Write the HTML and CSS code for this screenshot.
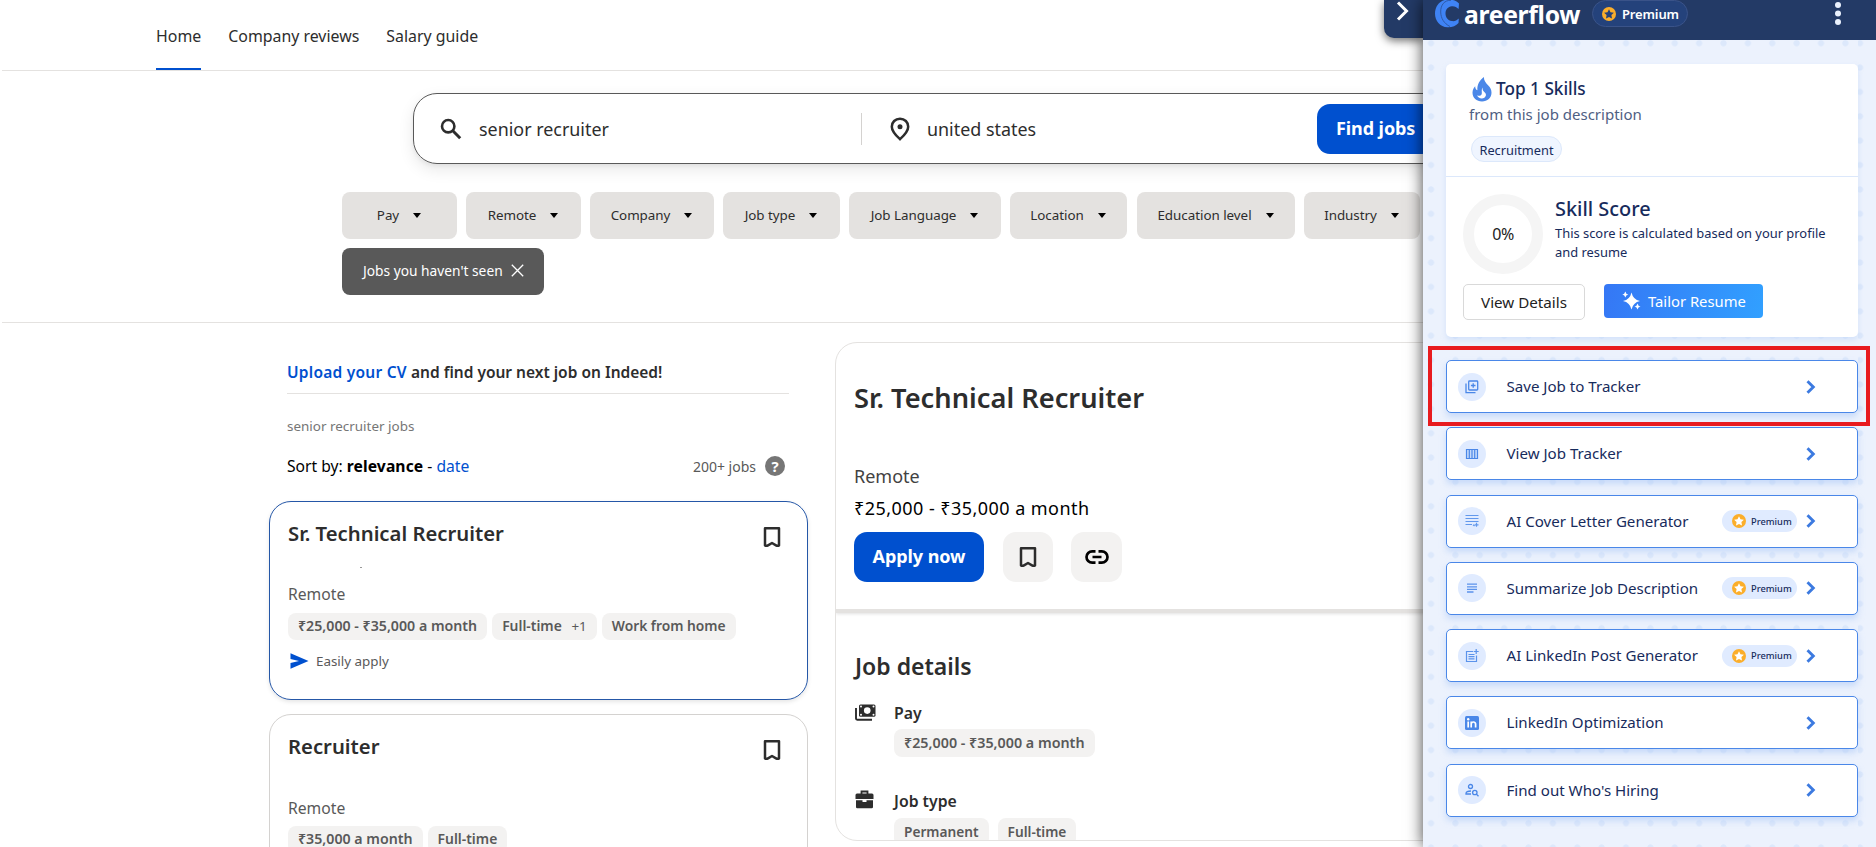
FILE: index.html
```html
<!DOCTYPE html>
<html lang="en">
<head>
<meta charset="utf-8">
<title>Job search</title>
<link rel="stylesheet" href="styles.css">
</head>
<body>
<svg class="defs" width="0" height="0">
  <symbol id="bookmark" viewBox="0 0 24 24"><path d="M5 3.2h14v17.3q-1.3.8-3-.2L12 18l-4 2.300q-1.700 1-3 .2z" fill="none" stroke="currentColor" stroke-width="2.500" stroke-linejoin="round"/></symbol>
  <symbol id="star" viewBox="0 0 14 14"><circle cx="7" cy="7" r="7" fill="#fbae2b"/><path class="star-shape" d="M7 2.200l1.500 3.100 3.400.5-2.500 2.300.6 3.400L7 9.900l-3 1.600.6-3.400L2.100 5.800l3.400-.5z"/></symbol>
  <symbol id="chevron" viewBox="0 0 10 14"><path d="M1.500 1.200L7.300 7l-5.800 5.800" fill="none" stroke="currentColor" stroke-width="2.900"/></symbol>
</svg>
<div class="site">
  <nav class="nav">
    <a class="active">Home</a><a>Company reviews</a><a>Salary guide</a>
  </nav>
  <section class="search-area">
    <form class="search">
      <div class="field what">
        <svg width="22" height="22" viewBox="0 0 22 22"><circle cx="8.200" cy="8.200" r="6.200" fill="none" stroke="#2d2d2d" stroke-width="2.600"/><path d="M12.800 12.800l7.400 7.400" stroke="#2d2d2d" stroke-width="3"/></svg>
        <span>senior recruiter</span>
      </div>
      <div class="field where">
        <svg width="20" height="24" viewBox="0 0 20 24"><path d="M10 1.700c-4.700 0-8.200 3.500-8.200 8 0 5 8.200 12.500 8.200 12.500s8.200-7.500 8.200-12.500c0-4.500-3.500-8-8.200-8z" fill="none" stroke="#2d2d2d" stroke-width="2.500"/><circle cx="10" cy="9.700" r="2.500" fill="#2d2d2d"/></svg>
        <span>united states</span>
      </div>
      <div class="find">Find jobs</div>
    </form>
    <div class="filters">
      <span class="chip w-pay">Pay<i></i></span><span class="chip w-remote">Remote<i></i></span><span class="chip w-company">Company<i></i></span><span class="chip w-type">Job type<i></i></span><span class="chip w-lang">Job Language<i></i></span><span class="chip w-loc">Location<i></i></span><span class="chip w-edu">Education level<i></i></span><span class="chip w-ind">Industry<i></i></span>
    </div>
    <div class="unseen">Jobs you haven't seen<svg width="13" height="13" viewBox="0 0 13 13"><path d="M.8.8l11.400 11.400M12.200.8L.8 12.200" stroke="#fff" stroke-width="1.300"/></svg></div>
  </section>
  <main class="content">
    <section class="list">
      <div class="list-head">
        <div class="upload"><a>Upload your CV</a> and find your next job on Indeed!</div>
        <div class="query">senior recruiter jobs</div>
        <div class="sort"><span>Sort by: <b>relevance</b> - <a>date</a></span><span class="count">200+ jobs <em>?</em></span></div>
      </div>
      <article class="job selected">
        <header><h2>Sr. Technical Recruiter</h2><svg class="bm" width="24" height="24"><use href="#bookmark"/></svg></header>
        <div class="smudge"></div>
        <div class="loc">Remote</div>
        <div class="tags"><span class="tag">₹25,000 - ₹35,000 a month</span><span class="tag">Full-time <small>+1</small></span><span class="tag home">Work from home</span></div>
        <div class="easy"><svg width="19" height="16" viewBox="0 0 19 16"><path d="M.5.3L18.500 8 .5 15.700V9.900L9 8 .5 6.100z" fill="#0050cf"/></svg>Easily apply</div>
      </article>
      <article class="job">
        <header><h2>Recruiter</h2><svg class="bm" width="24" height="24"><use href="#bookmark"/></svg></header>
        <div class="smudge none"></div>
        <div class="loc second">Remote</div>
        <div class="tags"><span class="tag">₹35,000 a month</span><span class="tag">Full-time</span></div>
      </article>
    </section>
    <section class="detail">
      <div class="detail-top">
        <h1>Sr. Technical Recruiter</h1>
        <div class="d-loc">Remote</div>
        <div class="d-pay">₹25,000 - ₹35,000 a month</div>
        <div class="actions">
          <span class="apply">Apply now</span>
          <span class="sq"><svg class="bm" width="24" height="24"><use href="#bookmark"/></svg></span>
          <span class="sq link"><svg width="24" height="16" viewBox="0 0 24 16"><path d="M10.500 2.300H7.200a5.700 5.700 0 0 0 0 11.400h3.300M13.500 2.300h3.300a5.700 5.700 0 0 1 0 11.400h-3.300M7.500 8h9" fill="none" stroke="#000" stroke-width="2.700"/></svg></span>
        </div>
      </div>
      <div class="detail-body">
        <h3>Job details</h3>
        <div class="fact pay">
          <svg width="21" height="17" viewBox="0 0 21 17"><path d="M1 4v10.500q0 1.200 1.200 1.200H17" fill="none" stroke="#2d2d2d" stroke-width="1.900"/><rect x="4" y=".5" width="16.500" height="12.200" rx="1.500" fill="#2d2d2d"/><circle cx="12.250" cy="6.600" r="3.300" fill="#fff"/><g fill="#fff"><circle cx="6" cy="2.500" r="1"/><circle cx="18.500" cy="2.500" r="1"/><circle cx="6" cy="10.700" r="1"/><circle cx="18.500" cy="10.700" r="1"/></g></svg>
          <div><h4>Pay</h4><div class="tags"><span class="tag">₹25,000 - ₹35,000 a month</span></div></div>
        </div>
        <div class="fact type">
          <svg width="20" height="19" viewBox="0 0 20 19"><path d="M6.500 4V1.500h6V4" fill="none" stroke="#2d2d2d" stroke-width="1.800"/><path d="M2 3.500h15q1.500 0 1.500 1.500v4h-18V5q0-1.500 1.500-1.500zM1 10.300h6.500v1.700h4v-1.700H18V17q0 1.300-1.300 1.300H2.300Q1 18.300 1 17z" fill="#2d2d2d"/></svg>
          <div><h4>Job type</h4><div class="tags"><span class="tag">Permanent</span><span class="tag">Full-time</span></div></div>
        </div>
      </div>
    </section>
  </main>
</div>

<div class="tab"><svg width="14" height="20" viewBox="0 0 14 20"><path d="M2 1.500L10.500 10 2 18.500" fill="none" stroke="#fff" stroke-width="3"/></svg></div>
<aside class="panel">
  <header class="brand">
    <svg class="logo" width="25" height="28" viewBox="0 0 25 28"><path d="M24 3.500C21 .5 17-.8 12.500-.5 5 0 0 6 0 13.500S5 27 12.500 27.300c4.500.2 8.500-1.300 11-4.300l.3-4.500c-2 2-4.500 3-7 2.500-3.800-.6-6.300-3.500-6.300-7.500s2.500-6.800 6.300-7.300c2.500-.3 5 .8 6.800 2.800z" fill="#3f83f4"/><path d="M16 .3C9.500 0 5.500 5 5.700 12c.2 6.500 3.300 11.500 9.300 14.500" fill="none" stroke="#2c559f" stroke-width=".9"/></svg>
    <span class="name">areerflow</span>
    <span class="badge"><svg width="14" height="14"><use href="#star"/></svg>Premium</span>
    <svg class="more" width="6" height="24" viewBox="0 0 6 24"><g fill="#eaf1fd"><circle cx="3" cy="3" r="3"/><circle cx="3" cy="11.500" r="3"/><circle cx="3" cy="20" r="3"/></g></svg>
  </header>
  <div class="panel-body">
    <div class="dots">
    <div class="skills">
      <div class="top">
        <div class="top-title"><svg width="20" height="25" viewBox="0 0 20 25"><path d="M11.800 0c.2 4 2.200 6 4.500 8.600 2 2.200 3.200 4 3.200 7.200 0 5-4 8.700-9.500 8.700S.5 20.800.5 15.800c0-2.800 1.200-5 2.700-6.500 0 2 .7 3.500 2.200 4C4.800 7.500 8 3 11.800 0z" fill="#4a87e8"/><path d="M10.600 10.500c-.3 2.600.8 3.700 2.200 5 1 1 1.400 2 1 3.300-.5 1.600-2 2.600-4 2.600-2.200 0-4.200-1.200-4.700-3.200 1.700 1 3.600.8 4.400-.6 1-1.800-.6-4.400 1.100-7.100z" fill="#fff"/></svg>Top 1 Skills</div>
        <div class="sub">from this job description</div>
        <span class="skill">Recruitment</span>
      </div>
      <div class="score">
        <div class="ring">0%</div>
        <div class="score-text"><h5>Skill Score</h5><p>This score is calculated based on your profile and resume</p></div>
      </div>
      <div class="btns"><span class="view">View Details</span><span class="tailor"><svg width="19" height="20" viewBox="0 0 19 20"><g fill="#fff"><path d="M9.500 1.500q1.500 7 8.500 8.500-7 1.500-8.500 8.500Q8 11.500 1 10q7-1.500 8.500-8.500z"/><path d="M3.300.5q.5 2.500 3 3-2.500.5-3 3-.5-2.500-3-3 2.500-.5 3-3zM15.500 12.500q.5 2.500 3 3-2.500.5-3 3-.5-2.500-3-3 2.500-.5 3-3z"/></g></svg>Tailor Resume</span></div>
    </div>
    <div class="items">
      <div class="item"><span class="ic"><svg width="14" height="14" viewBox="0 0 14 14"><g fill="none" stroke="#4a87e8" stroke-width="1.300"><rect x="3.700" y="1" width="9" height="9" rx=".8"/><path d="M1 3.500v9.200h9.500M8.200 3.200v4.600M5.900 5.500h4.600"/></g></svg></span><b>Save Job to Tracker</b><svg class="go" width="10" height="14"><use href="#chevron"/></svg></div>
      <div class="item"><span class="ic"><svg width="14" height="14" viewBox="0 0 14 14"><path d="M1.500 2.500h11v9h-11zM4.300 2.500v9M7 2.500v9M9.700 2.500v9" fill="#c5dafb" stroke="#4a87e8" stroke-width="1.200"/></svg></span><b>View Job Tracker</b><svg class="go" width="10" height="14"><use href="#chevron"/></svg></div>
      <div class="item"><span class="ic"><svg width="14" height="14" viewBox="0 0 14 14"><path d="M.5 1.500h13M.5 4.500h13M.5 7.500h13M.5 10.500h6.500M8 10.700l1.500 1.300M11.500 8.800v4M9.500 10.800h4" fill="none" stroke="#6298ec" stroke-width="1.200"/></svg></span><b>AI Cover Letter Generator</b><span class="prem"><svg width="14" height="14"><use href="#star"/></svg>Premium</span><svg class="go" width="10" height="14"><use href="#chevron"/></svg></div>
      <div class="item"><span class="ic"><svg width="14" height="14" viewBox="0 0 14 14"><path d="M2 3.200h10M2 5.800h10M2 8.400h10M2 11h6.500" fill="none" stroke="#5b93eb" stroke-width="1.300"/></svg></span><b>Summarize Job Description</b><span class="prem"><svg width="14" height="14"><use href="#star"/></svg>Premium</span><svg class="go" width="10" height="14"><use href="#chevron"/></svg></div>
      <div class="item"><span class="ic"><svg width="14" height="14" viewBox="0 0 14 14"><path d="M8 2.500H1.500v10h10V6.500M3.500 5.500h6M3.500 7.700h6M3.500 9.900h6M11.200 0v5M8.700 2.500h5" fill="none" stroke="#5b93eb" stroke-width="1.200"/></svg></span><b>AI LinkedIn Post Generator</b><span class="prem"><svg width="14" height="14"><use href="#star"/></svg>Premium</span><svg class="go" width="10" height="14"><use href="#chevron"/></svg></div>
      <div class="item"><span class="ic"><svg width="14" height="14" viewBox="0 0 14 14"><rect width="14" height="14" rx="1.500" fill="#4a87e8"/><path d="M3.200 5.500v6M6.200 11.500v-6M6.200 8q.3-2 2.200-2t2.200 2v3.500" fill="none" stroke="#fff" stroke-width="1.700"/><circle cx="3.200" cy="3.200" r="1.200" fill="#fff"/></svg></span><b>LinkedIn Optimization</b><svg class="go" width="10" height="14"><use href="#chevron"/></svg></div>
      <div class="item"><span class="ic"><svg width="14" height="14" viewBox="0 0 14 14"><g fill="none" stroke="#4a87e8" stroke-width="1.300"><circle cx="5.500" cy="3.500" r="2"/><path d="M6 8Q1 8 1 10.500V11h5"/><circle cx="9.800" cy="9.500" r="2.200"/><path d="M11.400 11.100l2.100 2.100"/></g></svg></span><b>Find out Who's Hiring</b><svg class="go" width="10" height="14"><use href="#chevron"/></svg></div>
    </div>
    </div>
  </div>
</aside>
<div class="highlight"></div>
</body>
</html>
```
FILE: styles.css
```css
* { box-sizing: border-box; }
body { margin: 0; width: 1876px; height: 847px; overflow: hidden; position: relative; background: #fff; color: #2d2d2d; font-family: "Noto Sans", "Open Sans", sans-serif; }
h1, h2, h3, h4, h5, p { margin: 0; font-weight: 600; }
svg { display: block; flex: none; }
.defs { position: absolute; }
.site { width: 1440px; height: 847px; overflow: hidden; }

/* navigation */
.nav { display: flex; gap: 27px; height: 71px; margin-left: 2px; padding-left: 154px; border-bottom: 1px solid #e4e2e0; font-size: 15.900px; }
.nav a { height: 70px; line-height: 73px; border-bottom: 2px solid transparent; }
.nav .active { border-color: #0050cf; }

/* search */
.search-area { height: 252px; margin-left: 2px; padding: 22px 0 0 340px; border-bottom: 1px solid #e4e2e0; }
.search { display: flex; align-items: center; width: 1095px; height: 71px; margin: 0 0 0 71px; border: 1px solid #595959; border-radius: 24px; box-shadow: 0 6px 16px rgba(0,0,0,.09), 0 2px 4px rgba(0,0,0,.06); font-size: 17.900px; }
.field { display: flex; align-items: center; height: 32px; }
.what { width: 448px; padding-left: 26px; gap: 17px; border-right: 1px solid #d4d2d0; }
.where { width: 455px; padding-left: 28px; gap: 17px; }
.find { height: 50px; padding: 0 20px 0 19px; line-height: 48px; border-radius: 13px; background: #0050cf; color: #fff; font-weight: 700; font-size: 18px; letter-spacing: -.08px; white-space: nowrap; }
.filters { display: flex; gap: 9px; margin-top: 28px; }
.chip { display: flex; align-items: center; justify-content: center; flex: none; gap: 14px; height: 47px; padding: 0 1px 1px 0; line-height: 18px; border-radius: 8px; background: #e4e2e0; font-size: 13.400px; letter-spacing: -.03px; }
.chip i { border: 4px solid transparent; border-top: 5px solid #000; border-bottom: 0; }
.w-pay, .w-remote { width: 115px; }
.w-company { width: 124px; }
.w-type, .w-loc { width: 117px; }
.w-lang { width: 152px; }
.w-edu { width: 158px; margin-left: 1px; }
.w-ind { width: 116px; }
.unseen { display: flex; align-items: center; gap: 8px; width: 202px; height: 47px; margin-top: 9px; padding: 0 0 2px 21px; border-radius: 8px; background: #595959; color: #fff; font-size: 13.750px; }

/* results */
.content { display: flex; gap: 27px; padding-left: 269px; }
.list { width: 539px; flex: none; }
.list-head { width: 502px; height: 178px; margin-left: 18px; }
.list-head a { color: #0050cf; }
.upload { height: 71px; padding-top: 38px; line-height: 22px; border-bottom: 1px solid #e4e2e0; font-size: 15.500px; font-weight: 600; }
.upload a { letter-spacing: .25px; }
.query { margin-top: 22px; line-height: 20px; font-size: 13.450px; color: #767676; }
.sort { display: flex; justify-content: space-between; align-items: center; height: 24px; margin: 18px 4px 0 0; font-size: 15.650px; color: #000; }
.sort b { letter-spacing: .1px; }
.count { display: flex; align-items: center; gap: 9px; font-size: 14px; color: #595959; }
.count em { width: 20px; height: 20px; border-radius: 50%; background: #767676; color: #fff; font: bold 15px/20px "Noto Sans", sans-serif; text-align: center; }
.job { height: 199px; margin-bottom: 14px; padding: 20px 18px; border: 1px solid #d4d2d0; border-radius: 22px; }
.job.selected { border-color: #2557a7; box-shadow: 0 2px 4px rgba(0,0,0,.1); }
.job header { display: flex; justify-content: space-between; height: 30px; padding-right: 5px; }
.job h2 { font-size: 20.300px; line-height: 22px; }
.job .bm { margin-top: 3px; }
.bm { color: #2d2d2d; }
.smudge { width: 2px; height: 1px; margin: 15px 0 14px 72px; background: #999; }
.smudge.none { background: transparent; }
.loc { font-size: 15.700px; line-height: 25px; color: #595959; }
.loc.second { line-height: 26px; margin-bottom: -1px; }
.tags { display: flex; gap: 5px; }
.tag { height: 27px; padding: 0 10px; line-height: 26px; border-radius: 8px; background: #f3f2f1; color: #595959; font-size: 13.900px; font-weight: 600; white-space: nowrap; }
.tag:first-child { font-size: 14.200px; }
.tag.home { font-size: 13.800px; }
.job .tags { margin-top: 6px; }
.tag small { margin-left: 6px; font-size: 13.400px; font-weight: 400; }
.easy { display: flex; gap: 7px; align-items: center; height: 20px; margin: 11px 0 0 2px; font-size: 13.400px; color: #595959; }

/* job description */
.detail { flex: none; width: 700px; height: 499px; margin-top: 19px; border: 1px solid #e4e2e0; border-radius: 22px; overflow: hidden; }
.detail-top { height: 270px; padding: 36px 0 0 18px; border-bottom: 4px solid #e4e2e0; box-shadow: 0 1px 3px rgba(0,0,0,.12); }
.detail h1 { font-size: 27.250px; line-height: 38px; }
.d-loc { margin-top: 46px; line-height: 26px; font-size: 18px; color: #424242; }
.d-pay { margin-top: 6px; line-height: 26px; font-size: 18px; letter-spacing: .45px; color: #000; }
.actions { display: flex; margin-top: 11px; }
.apply { width: 130px; height: 50px; line-height: 49px; border-radius: 13px; background: #0050cf; color: #fff; font-size: 18px; font-weight: 700; letter-spacing: -.08px; text-align: center; }
.sq { display: flex; align-items: center; justify-content: center; width: 50px; height: 50px; margin-left: 19px; border-radius: 13px; background: #f3f2f1; }
.sq.link { width: 51px; margin-left: 18px; }
.detail-body { padding: 36px 0 0 19px; }
.detail h3 { font-size: 23px; line-height: 34px; }
.fact { display: flex; }
.fact.pay { margin-top: 18px; gap: 18px; }
.fact.type { margin-top: 32px; gap: 19px; }
.fact h4 { font-size: 15.800px; line-height: 24px; }
.fact .tags { margin-top: 4px; gap: 9px; }
.fact.type .tags { margin-top: 5px; }
.fact .tag { height: 28px; line-height: 27px; }
.fact.pay .tag { font-size: 14.300px; }
.fact.type .tag { font-size: 13.700px; }
.fact.pay > svg { margin-top: 3px; }
.fact.type > svg { margin-top: 1px; }

/* extension panel */
.tab { position: absolute; left: 1384px; top: 0; width: 39px; height: 38px; padding: 1px 0 0 12px; border-radius: 0 0 0 10px; background: #233a66; box-shadow: 0 3px 8px rgba(0,0,0,.55); }
.panel { position: absolute; left: 1423px; top: 0; width: 453px; height: 847px; background: #ecf2fd; color: #172b5c; box-shadow: 0 0 15px rgba(0,0,0,.75); }
.brand { position: relative; display: flex; height: 40px; padding: 0 0 0 12px; background: #233a66; color: #fff; }
.name { margin: -4px 0 0 4px; width: 128px; font-size: 24.700px; line-height: 38px; font-weight: 700; letter-spacing: -.3px; }
.badge { display: flex; align-items: center; gap: 6px; width: 96px; height: 27px; padding-left: 9px; border: 1px solid #3a5389; border-radius: 14px; background: #24427b; fill: #24427b; font-size: 13px; font-weight: 600; letter-spacing: -.15px; }
.more { margin: 2px 0 0 147px; }
.panel-body { height: 807px; background: radial-gradient(circle at 12.200px 12.200px, #dce8fb 2.800px, transparent 3.400px) 424.800px -9px / 24.375px 24.375px #ecf2fd; }
.dots { width: 435px; height: 807px; padding: 24px 0 0 23px; background: radial-gradient(circle at 12.200px 12.200px, #dce8fb 2.800px, transparent 3.400px) -4.200px -9px / 24.375px 24.375px #ecf2fd; }
.skills { width: 412px; height: 273px; border-radius: 5px; background: #fff; box-shadow: 0 3px 5px rgba(190,212,248,.5); }
.top { height: 113px; padding: 13px 0 0 23px; border-bottom: 1px solid #dce8fb; }
.top-title { display: flex; gap: 4px; height: 25px; margin-left: 3px; line-height: 23px; font-size: 17.200px; font-weight: 500; }
.sub { line-height: 22px; margin: 1px 0 11px; font-size: 15px; color: #4f6083; }
.skill { display: block; width: 91px; height: 26px; margin: 0 0 0 2px; border: 1px solid #dce8fb; border-radius: 13px; background: #eff5ff; font-size: 12.800px; line-height: 26px; text-align: center; }
.score { display: flex; gap: 12px; padding: 17px 0 0 17px; height: 107px; }
.ring { width: 80px; height: 80px; border: 11px solid #f5f5f5; border-radius: 50%; color: #222; font-size: 16px; line-height: 59px; text-align: center; letter-spacing: -.4px; }
.score-text h5 { font-size: 19.900px; line-height: 28px; font-weight: 500; margin-top: 1px; }
.score-text p { width: 285px; font-size: 12.900px; line-height: 19px; font-weight: 400; padding-top: 1px; }
.btns { display: flex; gap: 19px; padding-left: 17px; }
.view { width: 122px; height: 36px; border: 1px solid #d9d9d9; border-radius: 5px; font-size: 15.200px; line-height: 34px; text-align: center; color: #222; }
.tailor { display: flex; align-items: center; gap: 7px; width: 159px; height: 34px; padding-left: 18px; border-radius: 4px; background: linear-gradient(100deg, #3577f5, #31a0ff); color: #fff; font-size: 14.800px; white-space: nowrap; }
.items { display: flex; flex-direction: column; gap: 14.300px; margin-top: 23px; }
.item { display: flex; align-items: center; width: 412px; height: 53px; padding: 0 41px 0 11px; border: 1px solid #4a87e8; border-radius: 5px; background: #fff; box-shadow: 0 4px 6px rgba(170,198,245,.55); font-size: 15.100px; white-space: nowrap; }
.item b { font-weight: 400; padding-bottom: 1px; }
.ic { display: flex; align-items: center; justify-content: center; flex: none; width: 28px; height: 28px; margin-right: 20.500px; border-radius: 50%; background: #e0ebff; }
.go { margin-left: auto; color: #3c7ae0; }
.prem { display: flex; align-items: center; gap: 5px; width: 75px; height: 22px; margin-left: auto; padding-left: 10px; border-radius: 11px; background: #e0ebff; font-size: 9.300px; font-weight: 500; fill: #fff; }
.prem + .go { margin-left: 9px; }
.highlight { position: absolute; left: 1428px; top: 346px; width: 442px; height: 80px; border: 4.500px solid #e81b1f; }
```
